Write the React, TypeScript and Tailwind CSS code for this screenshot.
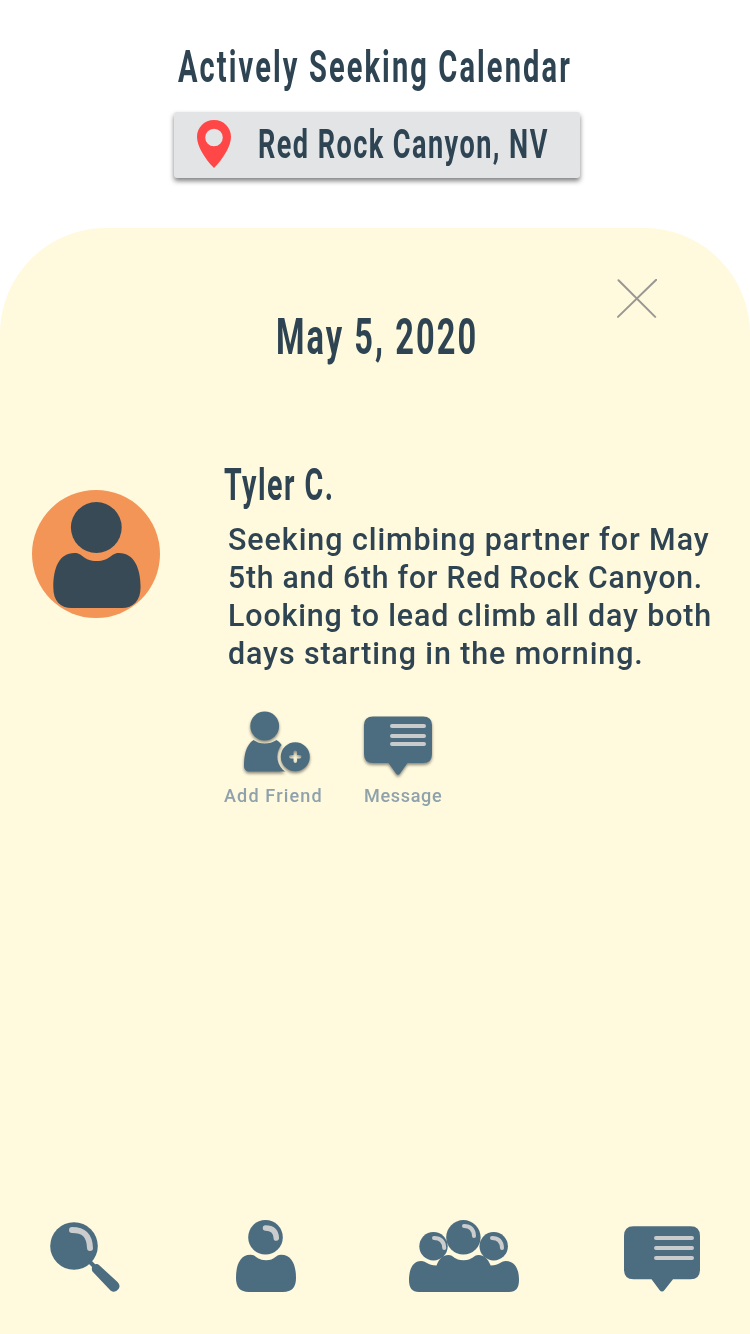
import type { ReactNode } from 'react';

function Condensed({ className, children }: { className: string; children: ReactNode }) {
  return <span className={`block w-max origin-left whitespace-nowrap ${className}`}>{children}</span>;
}

function PinIcon() {
  return (
    <svg className="h-12 w-[34px] shrink-0" viewBox="0 0 34 48" fill="none">
      <path
        fillRule="evenodd"
        d="M17 0C7.4 0 0 7.5 0 17C0 26 8 39 17 48C26 39 34 26 34 17C34 7.5 26.6 0 17 0ZM17 8.7A8.8 8.8 0 1 1 17 26.3A8.8 8.8 0 1 1 17 8.7Z"
        fill="#ff4747"
      />
    </svg>
  );
}

function CloseIcon() {
  return (
    <svg className="h-10 w-10" viewBox="0 0 40 40" stroke="#999793" strokeWidth="2" strokeLinecap="round">
      <path d="M1.5 1.2L38.2 37.9M39.2 0.8L1 37.9" />
    </svg>
  );
}

function Avatar() {
  return (
    <svg className="h-32 w-32 shrink-0" viewBox="0 0 128 128">
      <circle cx="64" cy="64" r="64" fill="#f39556" />
      <circle cx="64.3" cy="37.5" r="25.4" fill="#384a55" />
      <path
        d="M40 118C28 118 21.3 111 21.3 97C21.3 78 27 63 42.5 63C51 63 51 71 64.8 71C78 71 79 63 87 63C102 63 108.6 78 108.6 97C108.6 111 101 118 90 118Z"
        fill="#384a55"
      />
    </svg>
  );
}

function AddFriendIcon() {
  return (
    <svg
      className="h-[62px] w-[68px] overflow-visible drop-shadow-[0_2px_1.5px_rgba(0,0,0,0.45)]"
      viewBox="0 0 68 62"
      fill="#4c6c7f"
    >
      <mask id="badge-gap" maskUnits="userSpaceOnUse" x="0" y="0" width="68" height="62">
        <rect width="68" height="62" fill="#fff" />
        <circle cx="51.3" cy="45.7" r="18" fill="#000" />
      </mask>
      <circle cx="20.7" cy="15" r="14.4" />
      <path
        mask="url(#badge-gap)"
        d="M6 60.5C2 60.5 0 58.5 0 55C0 44 2 34 9.5 29C13 31.5 16 32.5 20.7 32.5C25 32.5 29 31.5 32.5 29C36 31 40 36 42 44V60.5Z"
      />
      <path
        fillRule="evenodd"
        d="M51.3 31.2A14.5 14.5 0 1 1 51.3 60.2A14.5 14.5 0 1 1 51.3 31.2ZM49.5 41.3V44H46.8Q45 44 45 45.8Q45 47.6 46.8 47.6H49.5V50.3Q49.5 52 51.3 52Q53.1 52 53.1 50.3V47.6H55.8Q57.5 47.6 57.5 45.8Q57.5 44 55.8 44H53.1V41.3Q53.1 39.5 51.3 39.5Q49.5 39.5 49.5 41.3Z"
      />
    </svg>
  );
}

function SmallMessageIcon() {
  return (
    <svg
      className="h-[60px] w-[68px] overflow-visible drop-shadow-[0_2px_1.5px_rgba(0,0,0,0.45)]"
      viewBox="0 0 68 60"
      fill="#4c6c7f"
    >
      <path d="M9 0.5H59Q68 0.5 68 9V38Q68 47 59 47H43.5L36 57.5Q34 60 32 57.5L24.5 47H9Q0 47 0 38V9Q0 0.5 9 0.5Z" />
      <path d="M28 10H60M28 20H60M28 28H60" stroke="#cacbcc" strokeWidth="4" strokeLinecap="round" />
    </svg>
  );
}

function SearchIcon() {
  return (
    <svg className="h-[70px] w-[70px]" viewBox="0 0 70 70" fill="#4c6c7f">
      <circle cx="24" cy="24" r="23.8" />
      <path d="M38 38L46 46" stroke="#4c6c7f" strokeWidth="4" />
      <path d="M42 45.5Q41.5 44 43.5 43.5L46 42Q47.5 41.5 49 43L67.5 60Q71 63.5 68.5 67Q65 71.5 60.5 68.5L42.5 49.5Q41.5 48 42 45.5Z" />
      <path d="M22 8C34 8 39.5 13 40 26" stroke="#cbcccd" strokeWidth="6" strokeLinecap="round" fill="none" />
    </svg>
  );
}

function PersonIcon() {
  return (
    <svg className="ml-[116px] h-[72px] w-[60px]" viewBox="0 0 60 72" fill="#4c6c7f">
      <circle cx="29.5" cy="17.3" r="17.3" />
      <path d="M13 72C4 72 0 67 0 58C0 45 4 34.7 14.5 34.7C20.5 34.7 20.5 40.2 30 40.2C39 40.2 39.5 34.7 45 34.7C56 34.7 60 45 60 58C60 67 56 72 47 72Z" />
      <path d="M29.5 8C37 8 40 12 40.3 18" stroke="#cbcccd" strokeWidth="5.5" strokeLinecap="round" fill="none" />
    </svg>
  );
}

function GroupIcon() {
  return (
    <svg className="ml-[113px] h-[72px] w-[110px]" viewBox="0 0 110 72" fill="#4c6c7f">
      <circle cx="24.5" cy="26.3" r="14.2" />
      <circle cx="84.7" cy="26.3" r="14.2" />
      <circle cx="54.4" cy="17.3" r="17.2" />
      <path d="M10 72C3 72 0 68 0 60C0 49 4 41 12 41C18 41 18 45.5 27.5 45.5C30 39 34 35 39.3 35C45 35 45 40.3 54.5 40.3C64 40.3 64 35 69.7 35C75 35 79 39 81.7 45.5C91 45.5 91 41 97 41C106 41 110 49 110 60C110 68 107 72 100 72Z" />
      <g stroke="#cbcccd" strokeWidth="4" strokeLinecap="round" fill="none">
        <path d="M55 6C62 6 64.7 10 65 16" />
        <path d="M25 18C32 18 35 22 35.2 28" />
        <path d="M83 18C90 18 92.7 22 93 28" />
      </g>
    </svg>
  );
}

function MessageIcon() {
  return (
    <svg className="ml-[105px] h-[66px] w-[76px]" viewBox="0 0 76 66" fill="#4c6c7f">
      <path d="M9.5 0.3H66.5Q76 0.3 76 10V43.5Q76 53.3 66.5 53.3H49L40.5 64Q38 67 35.5 64L27.5 53.3H9.5Q0 53.3 0 43.5V10Q0 0.3 9.5 0.3Z" />
      <path d="M32 12H68M32 22H68M32 32H68" stroke="#cacbcc" strokeWidth="4" strokeLinecap="round" />
    </svg>
  );
}

export default function App() {
  return (
    <div className="flex h-[1334px] w-[750px] flex-col overflow-hidden bg-white font-['Roboto',sans-serif] text-[#2e4453]">
      <header className="flex h-[228px] flex-col pt-[45px]">
        <h1 className="ml-[178px]">
          <Condensed className="scale-x-[0.66] text-[44px] leading-[44px] font-bold tracking-[3.2px]">
            Actively Seeking Calendar
          </Condensed>
        </h1>
        <div className="mt-[23px] ml-[174px] flex h-[66px] w-[406px] items-start rounded-[3px] bg-[#e3e4e6] pt-2 pl-[23px] shadow-[0_3px_5px_rgba(0,0,0,0.5)]">
          <PinIcon />
          <div className="-mt-2 ml-[27px]">
            <Condensed className="scale-x-[0.66] text-[41px] leading-[64px] font-bold tracking-[2.2px]">
              Red Rock Canyon, NV
            </Condensed>
          </div>
        </div>
      </header>

      <main className="flex flex-1 flex-col rounded-t-[106px] bg-[#fff9dd]">
        <button className="mt-[51px] mr-[93px] h-10 w-10 self-end" aria-label="Close">
          <CloseIcon />
        </button>
        <h2 className="-mt-[7px] ml-[276px]">
          <Condensed className="scale-x-[0.65] text-[50px] leading-[50px] font-bold tracking-[3.2px]">
            May 5, 2020
          </Condensed>
        </h2>

        <section className="mt-[101px] flex">
          <div className="mt-[27px] ml-8 mr-16">
            <Avatar />
          </div>
          <div className="flex flex-col">
            <Condensed className="scale-x-[0.65] text-[44px] leading-[44px] font-bold tracking-[2.3px]">
              Tyler C.
            </Condensed>
            <div className="mt-[13px] ml-1 text-[32px] leading-[38px] font-medium">
              <Condensed className="scale-x-[0.95] tracking-[1px]">Seeking climbing partner for May</Condensed>
              <Condensed className="scale-x-[0.94] tracking-[0.85px]">5th and 6th for Red Rock Canyon.</Condensed>
              <Condensed className="scale-x-[0.95] tracking-[0.9px]">Looking to lead climb all day both</Condensed>
              <Condensed className="scale-x-[0.95] tracking-[0.95px]">days starting in the morning.</Condensed>
            </div>
            <div className="mt-[39px] flex text-[19px] leading-5 font-medium text-[#8fa2ac]">
              <div className="w-[140px]">
                <div className="h-[75px] pl-5">
                  <AddFriendIcon />
                </div>
                <Condensed className="scale-x-[0.95] tracking-[1.2px]">Add Friend</Condensed>
              </div>
              <div>
                <div className="h-[75px] pt-[5px]">
                  <SmallMessageIcon />
                </div>
                <Condensed className="scale-x-[0.95] tracking-[0.7px]">Message</Condensed>
              </div>
            </div>
          </div>
        </section>

        <nav className="mt-auto mb-[42px] flex items-end px-[50px]">
          <SearchIcon />
          <PersonIcon />
          <GroupIcon />
          <MessageIcon />
        </nav>
      </main>
    </div>
  );
}
